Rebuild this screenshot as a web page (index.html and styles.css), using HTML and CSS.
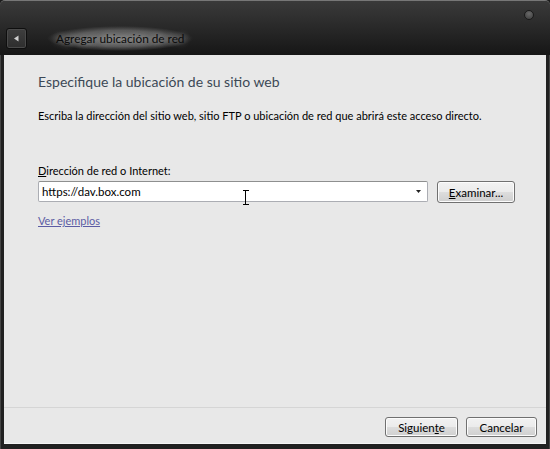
FILE: index.html
```html
<!DOCTYPE html>
<html lang="es">
<head>
<meta charset="utf-8">
<link rel="stylesheet" href="styles.css">
</head>
<body>
<div class="window">
  <div class="titlebar">
    <div class="knob"></div>
    <div class="back"><svg width="7" height="7" viewBox="0 0 7 7"><path d="M1 3.5 L5.5 0.5 L5.5 6.5 Z" fill="#cfcfcf"/></svg></div>
    <div class="title">Agregar ubicación de red</div>
  </div>
  <div class="content">
    <div class="main">
      <h1 class="heading">Especifique la ubicación de su sitio web</h1>
      <p class="desc">Escriba la dirección del sitio web, sitio FTP o ubicación de red que abrirá este acceso directo.</p>
      <div class="label"><u>D</u>irección de red o Internet:</div>
      <div class="row">
        <div class="combo">
          <span class="value">https://dav.box.com</span>
          <svg class="arrow" width="5" height="3" viewBox="0 0 5 3"><path d="M0 0 H5 L2.5 3 Z" fill="#222"/></svg>
          <svg class="ibeam" width="7" height="15" viewBox="0 0 7 15"><path d="M0.5 0.5 H6.5 M3.5 0.5 V14.5 M0.5 14.5 H6.5" stroke="#000" stroke-width="1" fill="none" shape-rendering="crispEdges"/></svg>
        </div>
        <button class="btn btn-browse"><u>E</u>xaminar...</button>
      </div>
      <a class="link">Ver ejemplos</a>
    </div>
    <div class="footer">
      <button class="btn btn-foot">Siguien<u>t</u>e</button>
      <button class="btn btn-foot btn-cancel">Cancelar</button>
    </div>
  </div>
</div>
</body>
</html>
```

FILE: styles.css
```css
html, body {
  margin: 0;
  padding: 0;
  width: 550px;
  height: 449px;
  overflow: hidden;
  background: #1c1c1c;
}
.window {
  width: 550px;
  height: 449px;
  box-sizing: border-box;
  display: flex;
  flex-direction: column;
  padding: 0 4px 5px 4px;
  background: #202020;
  border-top: 1px solid #777;
  border-radius: 5px 5px 0 0;
  box-shadow: inset 1px 0 0 #444, inset -1px 0 0 #444;
  font-family: Lato, "Noto Sans", sans-serif;
}
.titlebar {
  position: relative;
  height: 54px;
  margin: 0 -4px;
  padding: 0 4px;
  background: linear-gradient(#3a3a3a 0%, #2c2c2c 40%, #161616 100%);
  border-radius: 5px 5px 0 0;
  display: flex;
  align-items: flex-end;
  padding-bottom: 6px;
  box-sizing: border-box;
}
.knob {
  position: absolute;
  right: 16px;
  top: 9px;
  width: 8px;
  height: 8px;
  border-radius: 50%;
  background: radial-gradient(circle at 50% 35%, #6a6a6a, #3a3a3a);
  border: 1px solid #1a1a1a;
}
.back {
  width: 19px;
  height: 19px;
  margin-left: 2px;
  border: 1px solid #0e0e0e;
  border-radius: 3px;
  background: linear-gradient(#3e3e3e, #2e2e2e);
  box-shadow: inset 0 0 0 1px #4a4a4a;
  display: flex;
  align-items: center;
  justify-content: center;
}
.title {
  margin-left: 20px;
  margin-bottom: -2px;
  padding: 5px 9px;
  font-size: 11.8px;
  color: #0a0a0a;
  border-radius: 14px;
  background: radial-gradient(ellipse closest-side, rgba(150,150,150,0.75) 0%, rgba(130,130,130,0.55) 65%, rgba(100,100,100,0) 100%);
  text-shadow: 0 0 6px rgba(255,255,255,0.35), 0 0 10px rgba(255,255,255,0.3);
}
.content {
  flex: 1;
  display: flex;
  flex-direction: column;
  background: #e8e8e8;
  border-bottom: 1px solid #f4f4f4;
}
.main {
  flex: 1;
  padding: 17px 0 0 34px;
}
.heading {
  margin: 0;
  font-weight: normal;
  font-size: 14px;
  line-height: 20px;
  color: #3c4856;
}
.desc {
  margin: 16px 0 0 0;
  font-size: 11px;
  line-height: 16px;
  color: #000;
}
.label {
  margin-top: 39px;
  font-size: 11px;
  line-height: 16px;
  color: #000;
}
.row {
  margin-top: 2px;
  display: flex;
  align-items: flex-start;
  gap: 9px;
}
.combo {
  position: relative;
  width: 385px;
  height: 19px;
  background: #fff;
  border: 1px solid #abadb3;
  border-top-color: #8e8f8f;
  border-radius: 2px;
  display: flex;
  align-items: center;
  padding-left: 3px;
  box-sizing: content-box;
  font-size: 11.5px;
  color: #000;
}
.value {
  flex: 1;
}
.arrow {
  margin-right: 6px;
}
.ibeam {
  position: absolute;
  left: 203px;
  top: 8px;
}
.btn {
  font-family: Lato, "Noto Sans", sans-serif;
  font-size: 11.5px;
  color: #000;
  border: 1px solid #707070;
  border-radius: 3px;
  background: linear-gradient(#f2f2f2 0%, #ebebeb 50%, #dddddd 50%, #cfcfcf 100%);
  box-shadow: inset 0 0 0 1px #fcfcfc;
  padding: 0;
  margin: 0;
}
.btn-browse {
  width: 78px;
  height: 22px;
}
.link {
  display: inline-block;
  margin-top: 11px;
  font-size: 11px;
  color: #5c5ca4;
  text-decoration: underline;
}
.footer {
  height: 36px;
  border-top: 1px solid #d5d5d5;
  display: flex;
  justify-content: flex-end;
  align-items: flex-start;
  gap: 8px;
  padding: 9px 9px 0 0;
  box-sizing: border-box;
}
.btn-foot {
  width: 73px;
  height: 20px;
}
.btn-cancel {
  width: 71px;
}
```
